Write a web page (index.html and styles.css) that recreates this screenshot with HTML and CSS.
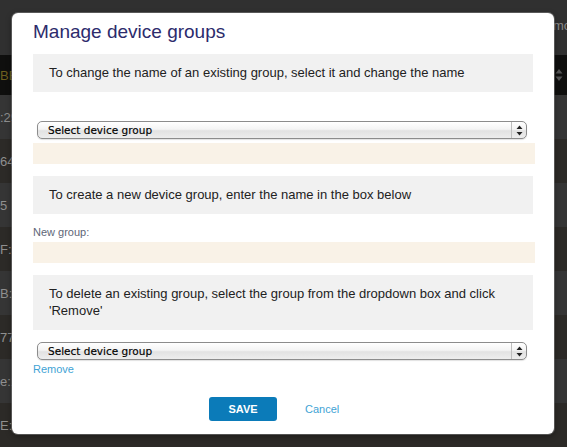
FILE: index.html
```html
<!DOCTYPE html>
<html>
<head>
<meta charset="utf-8">
<link rel="stylesheet" href="styles.css">
</head>
<body>
<div class="page">
  <div class="topbar"><span class="top-right">mo</span></div>
  <div class="thead"><span class="cell">BE</span><span class="sort">
    <svg width="8" height="14" viewBox="0 0 8 14"><path d="M4 1 L7.5 5.5 H0.5 Z M4 13 L7.5 8.5 H0.5 Z" fill="#555"/></svg></span></div>
  <div class="row a"><span class="cell">:29</span></div>
  <div class="row b"><span class="cell">64</span></div>
  <div class="row a"><span class="cell">5</span></div>
  <div class="row b"><span class="cell">F:3</span></div>
  <div class="row a"><span class="cell">B:</span></div>
  <div class="row b"><span class="cell">77</span></div>
  <div class="row a"><span class="cell">e:1</span></div>
  <div class="row b"><span class="cell">E:0</span></div>
</div>

<div class="modal">
  <h1 class="title">Manage device groups</h1>
  <div class="info">To change the name of an existing group, select it and change the name</div>
  <div class="select first">
    <span class="select-text">Select device group</span>
    <span class="select-arrows"><svg width="7" height="11" viewBox="0 0 7 11"><path d="M3.5 0.5 L6.5 4 H0.5 Z M3.5 10.5 L6.5 7 H0.5 Z" fill="#222"/></svg></span>
  </div>
  <div class="field"></div>
  <div class="info">To create a new device group, enter the name in the box below</div>
  <div class="label">New group:</div>
  <div class="field tight"></div>
  <div class="info">To delete an existing group, select the group from the dropdown box and click 'Remove'</div>
  <div class="select">
    <span class="select-text">Select device group</span>
    <span class="select-arrows"><svg width="7" height="11" viewBox="0 0 7 11"><path d="M3.5 0.5 L6.5 4 H0.5 Z M3.5 10.5 L6.5 7 H0.5 Z" fill="#222"/></svg></span>
  </div>
  <a class="link remove">Remove</a>
  <div class="footer">
    <span class="btn">SAVE</span>
    <a class="link cancel">Cancel</a>
  </div>
</div>
</body>
</html>
```

FILE: styles.css
```css
html, body {
  margin: 0;
  padding: 0;
  width: 567px;
  height: 447px;
  overflow: hidden;
  background: #2f2f2f;
  font-family: "Liberation Sans", Arial, sans-serif;
}

.page {
  width: 567px;
  height: 447px;
  background: #2f2f2f;
}

.topbar {
  height: 55px;
  background: #303030;
  position: relative;
}

.top-right {
  position: absolute;
  left: 553px;
  top: 18px;
  color: #8a8a8a;
  font-size: 13px;
}

.thead {
  height: 40px;
  background: #0f0f0e;
  display: flex;
  align-items: center;
  justify-content: space-between;
}

.thead .cell {
  color: #6d5f1e;
  font-size: 13px;
  width: 20px;
  padding-left: 0;
  white-space: nowrap;
}

.sort {
  margin-right: 4px;
  display: flex;
}

.row {
  height: 44px;
  display: flex;
  align-items: center;
}

.row.a { background: #353535; }
.row.b { background: #2c2a27; }

.row .cell {
  width: 24px;
  color: #8f8f8f;
  font-size: 13px;
  white-space: nowrap;
}

.row:first-of-type { height: 36px; }

.modal {
  position: absolute;
  left: 12px;
  top: 13px;
  width: 542px;
  height: 421px;
  box-sizing: border-box;
  padding: 8px 21px 0 21px;
  background: #fff;
  border-radius: 6px;
  box-shadow: 0 0 0 1px rgba(120, 120, 120, 0.6), 0 2px 6px rgba(0, 0, 0, 0.4);
}

.title {
  margin: 0;
  font-size: 19px;
  line-height: 22px;
  font-weight: normal;
  color: #2c2b6c;
}

.info {
  margin-top: 11px;
  background: #f1f1f1;
  color: #222;
  font-size: 13px;
  line-height: 17px;
  padding: 10px 16px 11px 16px;
  width: 500px;
  box-sizing: border-box;
}

.info + .label { margin-top: 12px; }

.select {
  margin-top: 12px;
  margin-left: 4px;
  width: 490px;
  height: 18px;
  box-sizing: border-box;
  border: 1px solid #8c8c8c;
  border-radius: 5px;
  background: linear-gradient(#ffffff 0%, #f4f4f4 45%, #e2e2e2 55%, #ededed 100%);
  display: flex;
  align-items: center;
  box-shadow: 0 1px 1px rgba(0, 0, 0, 0.12);
}

.select.first { margin-top: 29px; }

.select-text {
  flex: 1;
  padding-left: 10px;
  font-family: "DejaVu Sans", sans-serif;
  font-size: 10.5px;
  color: #000;
  -webkit-text-stroke: 0.15px #000;
}

.select-arrows {
  width: 14px;
  height: 16px;
  border-left: 1px solid #bdbdbd;
  display: flex;
  align-items: center;
  justify-content: center;
}

.field {
  margin-top: 4px;
  width: 502px;
  height: 21px;
  background: #f9f2e7;
}

.field.tight { margin-top: 3px; }

.field + .info { margin-top: 12px; }

.label {
  font-size: 11px;
  line-height: 13px;
  color: #5e6677;
}

.link {
  display: block;
  font-size: 11px;
  line-height: 13px;
  color: #3fa3d5;
  text-decoration: none;
}

.remove { margin-top: 3px; }

.footer {
  margin-top: 21px;
  display: flex;
  align-items: center;
  padding-left: 176px;
}

.btn {
  width: 68px;
  height: 24px;
  border-radius: 3px;
  background: #0b7bb9;
  color: #fff;
  font-weight: bold;
  font-size: 11px;
  display: flex;
  align-items: center;
  justify-content: center;
}

.cancel {
  margin-left: 28px;
}
```
